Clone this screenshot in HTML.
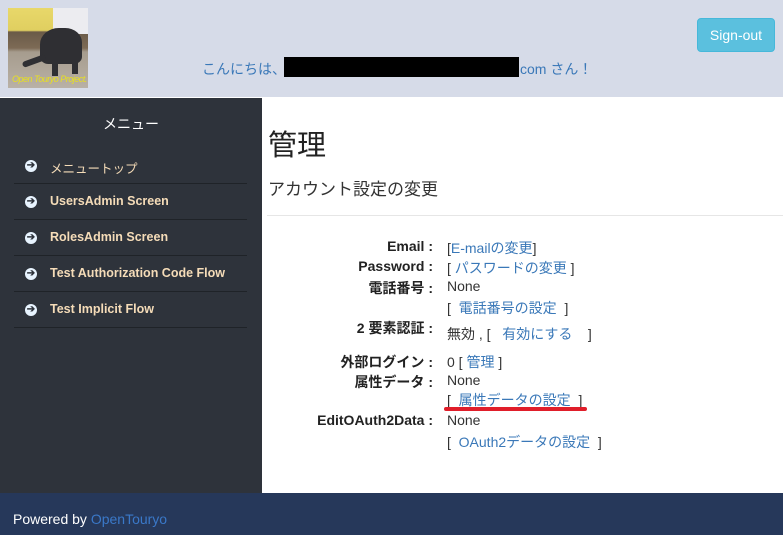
<!DOCTYPE html>
<html><head><meta charset="utf-8"><style>
*{margin:0;padding:0;box-sizing:border-box}
body{width:783px;height:535px;overflow:hidden;font-family:"Liberation Sans","Noto Sans CJK JP",sans-serif;background:#fff;position:relative;color:#333}
.hdr{position:absolute;left:0;top:0;width:783px;height:97px;background:#d6dbe8}
.logo{position:absolute;left:8px;top:8px;width:80px;height:80px;background:linear-gradient(180deg,#e8d86a 0,#e0cf60 28%,#6a5a48 30%,#7d6a55 50%,#a69c8e 55%,#b9b1a6 100%);overflow:hidden}
.logo .w{position:absolute;left:45px;top:0;width:35px;height:26px;background:#ececf0}
.logo .e{position:absolute;left:32px;top:20px;width:42px;height:36px;background:#2f2f33;border-radius:45% 40% 20% 20%}
.logo .t{position:absolute;left:14px;top:50px;width:24px;height:6px;background:#2f2f33;border-radius:4px;transform:rotate(-20deg)}
.logo .lg1{position:absolute;left:44px;top:50px;width:6px;height:18px;background:#2f2f33}
.logo .lg2{position:absolute;left:64px;top:50px;width:6px;height:16px;background:#2f2f33}
.logo span{position:absolute;left:4px;top:66px;font-size:9px;color:#e8e020;font-style:italic;white-space:nowrap;letter-spacing:-0.5px}
.hello{position:absolute;left:202px;top:59px;font-size:14px;color:#3a78b8}
.black{position:absolute;left:284px;top:57px;width:235px;height:20px;background:#000}
.com{position:absolute;left:520px;top:59px;font-size:14px;color:#3a78b8}
.btn{position:absolute;left:697px;top:18px;width:78px;height:34px;background:#5bc0de;border:1px solid #46b8da;border-radius:4px;color:#fff;font-size:14px;text-align:center;line-height:32px}
.side{position:absolute;left:0;top:98px;width:262px;height:395px;background:#2e333b}
.side h3{position:absolute;left:0;width:262px;top:16px;text-align:center;color:#fff;font-weight:normal;font-size:14px}
.item{position:absolute;left:14px;width:233px;height:36px;border-bottom:1px solid #1f2328;color:#f5dcb8;font-size:12.5px;font-weight:bold}
.item .ic{position:absolute;left:11px;top:12px;width:12px;height:12px;border-radius:50%;background:#e8f4ff;color:#2e333b;font-size:10px;line-height:12px;text-align:center;font-weight:bold}
.item .tx{position:absolute;left:36px;top:10px}
.ft{position:absolute;left:0;top:493px;width:783px;height:42px;background:#26385a;color:#fff;font-size:14px;padding:18px 0 0 13px}
.ft a{color:#3a78c8}
h1{position:absolute;left:268px;top:122px;font-size:29px;font-weight:normal;color:#222}
h2{position:absolute;left:268px;top:175px;font-size:17px;font-weight:normal;color:#333}
.hr{position:absolute;left:267px;top:215px;width:516px;height:1px;background:#e6e6e6}
.l{position:absolute;right:350px;font-size:14px;font-weight:bold;color:#222;white-space:nowrap}
.v{position:absolute;left:447px;font-size:14px;color:#333;white-space:nowrap}
.v a{color:#3a78b8}
.red{position:absolute;left:444px;top:407px;width:143px;height:4px;background:#e01e2a;border-radius:2px}
</style></head><body>
<div class="hdr">
<div class="logo"><div class="w"></div><div class="e"></div><div class="t"></div><div class="lg1"></div><div class="lg2"></div><span>Open Touryo Project.</span></div>
<div class="hello">こんにちは、</div><div class="black"></div><div class="com">com さん！</div>
<div class="btn">Sign-out</div>
</div>
<div class="side"><h3>メニュー</h3></div>
<div class="item" style="top:148px"><span class="ic">➔</span><span class="tx" style="font-weight:normal">メニュートップ</span></div>
<div class="item" style="top:184px"><span class="ic">➔</span><span class="tx">UsersAdmin Screen</span></div>
<div class="item" style="top:220px"><span class="ic">➔</span><span class="tx">RolesAdmin Screen</span></div>
<div class="item" style="top:256px"><span class="ic">➔</span><span class="tx">Test Authorization Code Flow</span></div>
<div class="item" style="top:292px"><span class="ic">➔</span><span class="tx">Test Implicit Flow</span></div>
<h1>管理</h1>
<h2>アカウント設定の変更</h2>
<div class="hr"></div>
<div class="l" style="top:238px">Email :</div><div class="v" style="top:238px">[<a>E-mailの変更</a>]</div>
<div class="l" style="top:258px">Password :</div><div class="v" style="top:258px">[ <a>パスワードの変更</a> ]</div>
<div class="l" style="top:278px">電話番号 :</div><div class="v" style="top:278px">None</div>
<div class="v" style="top:298px">[&nbsp; <a>電話番号の設定</a>&nbsp; ]</div>
<div class="l" style="top:318px">2 要素認証 :</div><div class="v" style="top:324px">無効 , [&nbsp;&nbsp; <a>有効にする</a>&nbsp;&nbsp;&nbsp; ]</div>
<div class="l" style="top:352px">外部ログイン :</div><div class="v" style="top:352px">0 [ <a>管理</a> ]</div>
<div class="l" style="top:372px">属性データ :</div><div class="v" style="top:372px">None</div>
<div class="v" style="top:390px">[&nbsp; <a>属性データの設定</a>&nbsp; ]</div>
<div class="red"></div>
<div class="l" style="top:412px">EditOAuth2Data :</div><div class="v" style="top:412px">None</div>
<div class="v" style="top:432px">[&nbsp; <a>OAuth2データの設定</a>&nbsp; ]</div>
<div class="ft">Powered by <a>OpenTouryo</a></div>
</body></html>
